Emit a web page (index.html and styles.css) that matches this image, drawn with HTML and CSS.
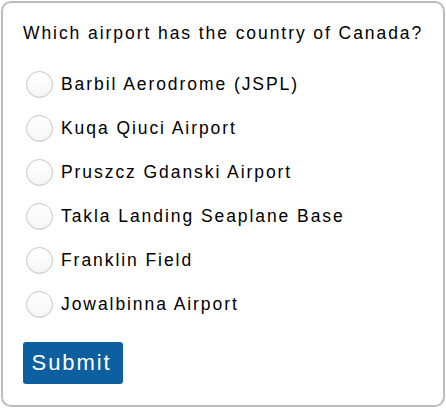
FILE: index.html
```html
<!DOCTYPE html>
<html>
<head>
<meta charset="utf-8">
<link rel="stylesheet" href="styles.css">
</head>
<body>
<form class="card">
  <div class="question">Which airport has the country of Canada?</div>
  <div class="options">
    <label class="option"><input type="radio" name="a"><span class="dot"></span><span>Barbil Aerodrome (JSPL)</span></label>
    <label class="option"><input type="radio" name="a"><span class="dot"></span><span>Kuqa Qiuci Airport</span></label>
    <label class="option"><input type="radio" name="a"><span class="dot"></span><span>Pruszcz Gdanski Airport</span></label>
    <label class="option"><input type="radio" name="a"><span class="dot"></span><span>Takla Landing Seaplane Base</span></label>
    <label class="option"><input type="radio" name="a"><span class="dot"></span><span>Franklin Field</span></label>
    <label class="option"><input type="radio" name="a"><span class="dot"></span><span>Jowalbinna Airport</span></label>
  </div>
  <button type="button" class="submit">Submit</button>
</form>
</body>
</html>
```

FILE: styles.css
```css
html, body {
  margin: 0;
  padding: 0;
  background: #ffffff;
}
body {
  font-family: "Liberation Sans", Arial, sans-serif;
  color: #000000;
}
.card {
  box-sizing: border-box;
  margin: 1px;
  width: 444px;
  height: 406px;
  border: 2px solid #bcbcbc;
  border-radius: 10px;
  padding: 19px 20px 0 20px;
  display: flex;
  flex-direction: column;
}
.question {
  font-size: 17.5px;
  line-height: 22px;
  letter-spacing: 1.93px;
  white-space: nowrap;
}
.options {
  display: flex;
  flex-direction: column;
  margin-top: 18px;
}
.option {
  display: flex;
  align-items: center;
  height: 44px;
  font-size: 17.5px;
  letter-spacing: 1.93px;
  gap: 8px;
  padding-left: 3px;
  white-space: nowrap;
}
.option input {
  display: none;
}
.dot {
  flex: none;
  box-sizing: border-box;
  width: 27px;
  height: 27px;
  border-radius: 50%;
  border: 1px solid #c6c6c6;
  background: linear-gradient(#ffffff, #f6f6f6);
  box-shadow: inset 0 -1px 1px rgba(0, 0, 0, 0.05);
}
.submit {
  align-self: flex-start;
  margin-top: 16px;
  width: 100px;
  height: 42px;
  border: none;
  border-radius: 3px;
  background: #0e5fa0;
  color: #ffffff;
  font-family: "Liberation Sans", Arial, sans-serif;
  font-size: 22px;
  letter-spacing: 1.9px;
  padding: 0 3px 0 0;
}
```
